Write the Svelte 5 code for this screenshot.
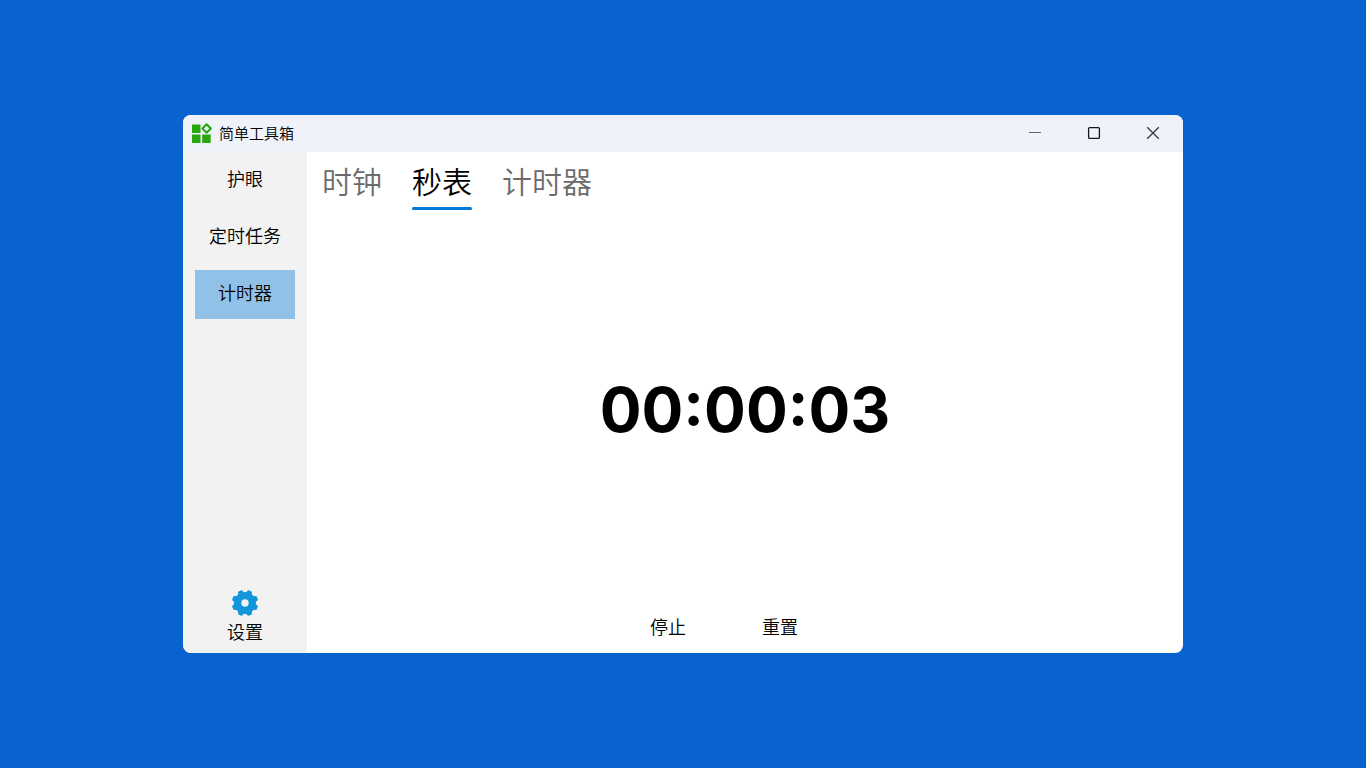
<script>
  import { onDestroy } from 'svelte';

  const pages = ['护眼', '定时任务', '计时器'];
  const tabs = ['时钟', '秒表', '计时器'];

  let page = $state('计时器');
  let tab = $state('秒表');
  let seconds = $state(3);
  let timer = $state(null);

  const pad = (n) => String(n).padStart(2, '0');
  let display = $derived(
    `${pad(Math.floor(seconds / 3600))}:${pad(Math.floor(seconds / 60) % 60)}:${pad(seconds % 60)}`
  );

  function stop() {
    clearInterval(timer);
    timer = null;
  }

  function reset() {
    stop();
    seconds = 0;
  }

  onDestroy(stop);
</script>

<div class="desktop">
  <div class="window">
    <header class="titlebar">
      <svg class="logo" viewBox="0 0 20 20" aria-hidden="true">
        <path fill="#27a60f" d="M0 1.500h8.500v8.500H0zM0 11.500h8.500v8.500H0zM10.200 11.500h8.500v8.500h-8.500z" />
        <path fill="none" stroke="#27a60f" stroke-width="2" stroke-linejoin="round" d="M14.600 1.300L18.800 5.500L14.600 9.700L10.400 5.500Z" />
      </svg>
      <h1>简单工具箱</h1>
      <div class="caption">
        <button aria-label="最小化">
          <svg viewBox="0 0 14 14"><path stroke="#666b70" d="M1 6.500H13" /></svg>
        </button>
        <button aria-label="最大化">
          <svg viewBox="0 0 14 14"><rect x="1.600" y="1.600" width="10.800" height="10.800" rx="1" stroke="#15171a" stroke-width="1.300" /></svg>
        </button>
        <button aria-label="关闭">
          <svg viewBox="0 0 14 14"><path stroke="#34373b" stroke-width="1.300" d="M1.200 1.200L12.800 12.800M12.800 1.200L1.200 12.800" /></svg>
        </button>
      </div>
    </header>

    <div class="body">
      <aside>
        <nav>
          {#each pages as name}
            <button class="item" class:active={page === name} onclick={() => (page = name)}>{name}</button>
          {/each}
        </nav>
        <button class="settings">
          <svg viewBox="-13 -13 26 26" aria-hidden="true">
            <g fill="#1296db">
              <circle r="11" />
              {#each [22.5, 67.5, 112.5, 157.5, 202.5, 247.5, 292.5, 337.5] as angle}
                <path transform={`rotate(${angle})`} d="M-3.200 -10L-2.200 -12.700Q-2 -13.200 -1.500 -13.200H1.500Q2 -13.200 2.200 -12.700L3.200 -10Z" />
              {/each}
            </g>
            <circle r="3.700" fill="#f2f2f2" />
          </svg>
          <span>设置</span>
        </button>
      </aside>

      <main>
        <div class="tabs" role="tablist">
          {#each tabs as name}
            <button role="tab" aria-selected={tab === name} class="tab" class:current={tab === name} onclick={() => (tab = name)}>{name}</button>
          {/each}
        </div>
        <time class="readout">{display}</time>
        <div class="controls">
          <button onclick={stop}>停止</button>
          <button onclick={reset}>重置</button>
        </div>
      </main>
    </div>
  </div>
</div>

<style>
  :global(body) {
    margin: 0;
    background: #0863d0;
  }

  .desktop {
    min-height: 100vh;
    display: grid;
    place-items: center;
    box-sizing: border-box;
    padding: 24px;
    color: #000;
    font-family: "Noto Sans CJK SC", sans-serif;
    font-weight: 350;
  }

  button {
    margin: 0;
    padding: 0;
    border: 0;
    background: none;
    color: inherit;
    font: inherit;
    cursor: pointer;
  }

  .window {
    display: flex;
    flex-direction: column;
    width: 100%;
    max-width: 1000px;
    min-height: 538px;
    border-radius: 8px;
    overflow: hidden;
    background: #fff;
  }

  .titlebar {
    display: flex;
    align-items: center;
    height: 35px;
    padding: 0 1px 2px 9px;
    background: #eff3f9;
  }

  .logo {
    width: 20px;
    height: 20px;
  }

  h1 {
    margin: 0 auto 0 7px;
    font-size: 15px;
    font-weight: 350;
    line-height: 20px;
  }

  .caption {
    display: flex;
    align-self: stretch;
  }

  .caption button {
    display: grid;
    place-items: center;
    width: 59px;
  }

  .caption svg {
    width: 14px;
    height: 14px;
    fill: none;
  }

  .body {
    flex: 1;
    display: flex;
  }

  aside {
    display: flex;
    flex-direction: column;
    justify-content: space-between;
    width: 100px;
    padding: 4px 12px 10px;
    background: #f2f2f2;
    font-size: 18px;
    line-height: 24px;
  }

  nav {
    display: flex;
    flex-direction: column;
    gap: 8px;
  }

  .item {
    height: 49px;
    padding-bottom: 6px;
  }

  .item.active {
    background: #91c1e7;
  }

  .settings {
    display: flex;
    flex-direction: column;
    align-items: center;
    gap: 3px;
  }

  .settings svg {
    width: 26px;
    height: 26px;
  }

  main {
    flex: 1;
    display: flex;
    flex-direction: column;
  }

  .tabs {
    display: flex;
    gap: 30px;
    padding: 7px 15px 0;
  }

  .tab {
    display: flex;
    flex-direction: column;
    gap: 6px;
    color: #6b6b6b;
    font-size: 30px;
    line-height: 42px;
  }

  .tab::after {
    content: "";
    height: 3px;
    width: 100%;
    border-radius: 2px;
  }

  .tab.current {
    color: #000;
  }

  .tab.current::after {
    background: #0078d7;
  }

  .readout {
    margin: auto;
    font-family: Inter, sans-serif;
    font-size: 62px;
    font-weight: 700;
    line-height: 80px;
  }

  .controls {
    display: flex;
    justify-content: center;
    gap: 40px;
    padding: 0 42px 10px 0;
    font-size: 18px;
    line-height: 34px;
  }

  .controls button {
    width: 72px;
  }
</style>
